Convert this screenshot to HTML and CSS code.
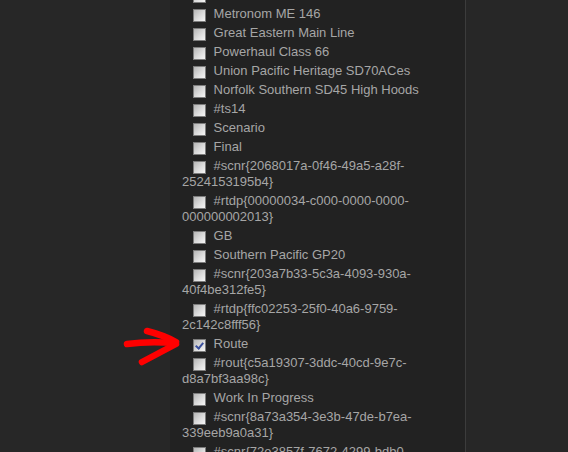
FILE: index.html
```html
<!DOCTYPE html>
<html lang="en">
<head>
  <meta charset="UTF-8">
  <meta name="viewport" content="width=device-width, initial-scale=1.0">
  <title>Content Filters</title>
  <link rel="stylesheet" href="styles.css">
</head>
<body>
  <div id="filter-panel">
    <div class="filter-list">
      <label class="item"><input type="checkbox"><span class="box"></span> Class 390 Pendolino</label>
      <label class="item"><input type="checkbox"><span class="box"></span> Metronom ME 146</label>
      <label class="item"><input type="checkbox"><span class="box"></span> Great Eastern Main Line</label>
      <label class="item"><input type="checkbox"><span class="box"></span> Powerhaul Class 66</label>
      <label class="item"><input type="checkbox"><span class="box"></span> Union Pacific Heritage SD70ACes</label>
      <label class="item"><input type="checkbox"><span class="box"></span> Norfolk Southern SD45 High Hoods</label>
      <label class="item"><input type="checkbox"><span class="box"></span> #ts14</label>
      <label class="item"><input type="checkbox"><span class="box"></span> Scenario</label>
      <label class="item"><input type="checkbox"><span class="box"></span> Final</label>
      <label class="item"><input type="checkbox"><span class="box"></span> #scnr{2068017a-0f46-49a5-a28f-<wbr>2524153195b4}</label>
      <label class="item"><input type="checkbox"><span class="box"></span> #rtdp{00000034-c000-0000-0000-<wbr>000000002013}</label>
      <label class="item"><input type="checkbox"><span class="box"></span> GB</label>
      <label class="item"><input type="checkbox"><span class="box"></span> Southern Pacific GP20</label>
      <label class="item"><input type="checkbox"><span class="box"></span> #scnr{203a7b33-5c3a-4093-930a-<wbr>40f4be312fe5}</label>
      <label class="item"><input type="checkbox"><span class="box"></span> #rtdp{ffc02253-25f0-40a6-9759-<wbr>2c142c8fff56}</label>
      <label class="item"><input type="checkbox" checked><span class="box"></span> Route</label>
      <label class="item"><input type="checkbox"><span class="box"></span> #rout{c5a19307-3ddc-40cd-9e7c-<wbr>d8a7bf3aa98c}</label>
      <label class="item"><input type="checkbox"><span class="box"></span> Work In Progress</label>
      <label class="item"><input type="checkbox"><span class="box"></span> #scnr{8a73a354-3e3b-47de-b7ea-<wbr>339eeb9a0a31}</label>
      <label class="item"><input type="checkbox"><span class="box"></span> #scnr{72e3857f-7672-4299-bdb0-<wbr>5f1c0e9d24a7}</label>
    </div>
  </div>

  <!-- hand-drawn marker pointing at the ticked entry -->
  <svg class="marker" width="72" height="46" viewBox="0 0 72 46">
    <g fill="none" stroke="#f00" stroke-width="6.5" stroke-linecap="round" stroke-linejoin="round">
      <path d="M9 19 Q30 16 57 18" />
      <path d="M29 6 Q45 10 58 17" />
      <path d="M58 19 Q41 28 24 37" />
    </g>
  </svg>
</body>
</html>
```

FILE: styles.css
```css
body {
  margin: 0;
  height: 452px;
  overflow: hidden;
  background-color: #272727;
  font-family: "Liberation Sans", Arial, sans-serif;
  font-size: 13px;
  color: #a6a6a6;
}

#filter-panel {
  box-sizing: border-box;
  width: 296px;
  height: 100%;
  margin-left: 170px;
  padding: 0 10px 0 12px;
  background-color: #222;
  border-right: 1px solid #3c3c3c;
  overflow: hidden;
}

/* list is scrolled a little way down */
.filter-list {
  margin-top: -16px;
}

.item {
  display: block;
  padding-top: 3px;
  line-height: 16px;
  text-indent: 7px;
}

.item input {
  display: none;
}

.item .box {
  display: inline-block;
  position: relative;
  box-sizing: border-box;
  width: 13px;
  height: 13px;
  margin: 0 4px 0 4px;
  vertical-align: -4px;
  text-indent: 0;
  border: 1px solid #7c7c7c;
  background: linear-gradient(135deg, #b6b6b6 0%, #dcdcdc 55%, #f6f6f6 100%);
}

.item input:checked + .box::after {
  content: "";
  position: absolute;
  left: 3px;
  top: 1px;
  width: 3px;
  height: 6px;
  border: solid #3a4f9c;
  border-width: 0 2px 2px 0;
  transform: rotate(40deg);
}

.marker {
  position: absolute;
  left: 118px;
  top: 325px;
}
```
